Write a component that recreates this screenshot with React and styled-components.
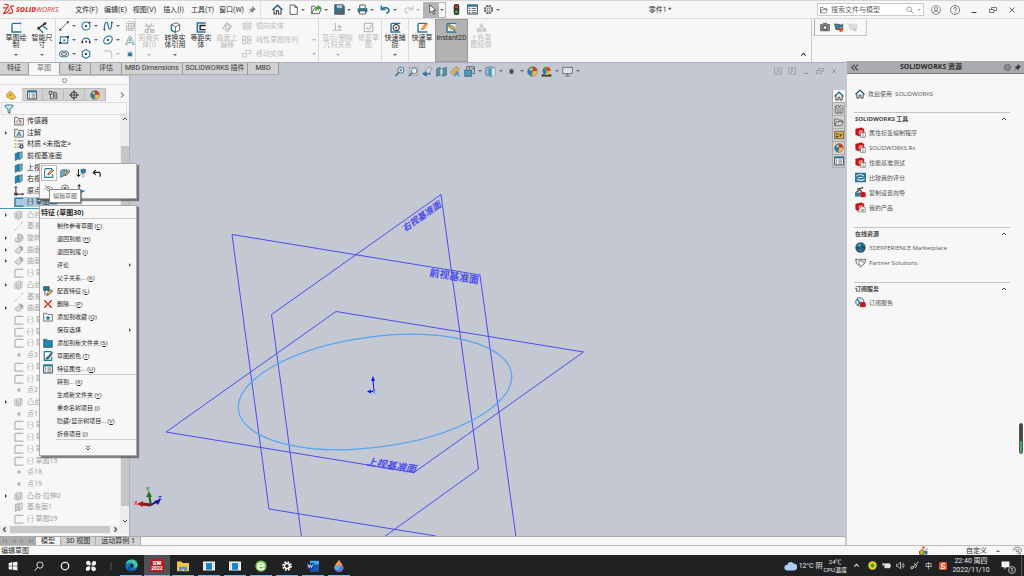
import React, { useState } from "react"
import styled, { createGlobalStyle, css } from "styled-components"

const theme = {
	paper: "#f7f7f7",
	canvas: "#c4c8d3",
	line: "#c8c8c8",
	tab: "#d2d2d2",
	ink: "#2b2b2b",
	muted: "#a4a4a4",
	blue: "#2a7799",
	plane: "#4c4cf0",
}

const GlobalStyle = createGlobalStyle`
	* {
		box-sizing: border-box;
	}
	body {
		margin: 0;
		overflow: hidden;
		font-family: Roboto, "Noto Sans CJK SC", sans-serif;
		font-size: 7px;
		line-height: 8px;
		color: ${theme.ink};
	}
	button, input {
		font: inherit;
		color: inherit;
		background: none;
		border: 0;
		padding: 0;
		margin: 0;
	}
	ul {
		list-style: none;
		margin: 0;
		padding: 0;
	}
	a {
		color: inherit;
		text-decoration: none;
	}
`

/* ---------- icons, all on a 16 x 16 grid ---------- */

const B = "#2a7799"
const K = "#404040"
const G = "#bdbdbd"

const sketchCorner = color => <path d="M15 2H3Q1.500 2 1.500 4V14.500H15" stroke={color} strokeWidth="2" />

const cube = (
	<>
		<path d="M1 3L9 1l4 2v8l-8 2-4-2z" fill="#c5161d" stroke="#8c1014" strokeWidth=".6" />
		<path d="M5 5l7-1v7l-7 1z" fill="#e43b3b" />
		<path d="M7 5v5M7 7.500h3M10 5v5" stroke="#fff" strokeWidth="1" />
	</>
)

const icons = {
	home: (
		<>
			<path d="M3 8v6.500h3.500V10h3v4.500H13V8" stroke={K} strokeWidth="1.500" />
			<path d="M.8 8.700L8 1.800l7.200 6.900" stroke="#1f5d7a" strokeWidth="2.200" />
		</>
	),
	page: <path d="M3 1.500h7l3.500 3.500v10H3zM10 1.500V5h3.500" stroke={K} fill="#fff" strokeWidth="1.200" />,
	open: (
		<>
			<path d="M1 14V3h4l1.500 2H10M1 14h11l3-8H5z" stroke="#555" strokeWidth="1.300" />
			<path d="M7 10c1-4 3-5 5-5M9.500 2.500L13 5l-3 3" stroke="#3ba52b" strokeWidth="2.200" />
		</>
	),
	save: (
		<>
			<path d="M1 1h12l2 2v12H1z" fill="#2f7291" stroke="#33434b" />
			<path d="M4 1.500h8V6H4z" fill="#b7c6cd" />
			<path d="M3.500 9h9v6h-9z" fill="#5d6468" />
		</>
	),
	print: (
		<>
			<path d="M4 6V1.500h8V6" stroke="#444" fill="#fff" strokeWidth="1.300" />
			<path d="M1 6h14v6H1z" fill="#2f7291" />
			<path d="M3.500 10h9v4.500h-9z" fill="#fff" stroke="#444" strokeWidth="1.200" />
		</>
	),
	undo: <path d="M2 2v6h6M2.500 7.500C6 4 13 5 13 9.500c0 2.500-2 3.500-4 4" stroke={B} strokeWidth="2.400" />,
	redo: <path d="M14 2v6H8M13.500 7.500C10 4 3 5 3 9.500c0 2.500 2 3.500 4 4" stroke="#d0d0d0" strokeWidth="2" />,
	cursor: <path d="M4 1v12l3-3 2.500 5 2-1L9 9.500h4z" fill="#fff" stroke="#333" strokeWidth="1.100" />,
	traffic: (
		<>
			<rect x="4" y="0" width="8" height="16" rx="3" fill="#333" />
			<circle cx="8" cy="4" r="2.400" fill="#e3342b" />
			<circle cx="8" cy="11.500" r="2.400" fill="#47a53a" />
		</>
	),
	list: (
		<>
			<path d="M1 1.500h14v13H1z" stroke="#3b4b54" fill="#fff" strokeWidth="1.500" />
			<path d="M1 1h14v3H1z" fill={B} />
			<path d="M3 6.500h2M3 9.500h2M3 12.500h2" stroke={B} strokeWidth="1.800" />
			<path d="M7 6.500h6M7 9.500h6M7 12.500h6" stroke="#555" strokeWidth="1.300" />
		</>
	),
	gear: (
		<>
			<circle cx="8" cy="8" r="5.800" stroke="#555" strokeWidth="1.700" strokeDasharray="3 1.550" />
			<circle cx="8" cy="8" r="4.800" stroke="#666" strokeWidth="1.200" />
			<circle cx="8" cy="8" r="2.200" stroke="#555" strokeWidth="1.200" />
		</>
	),
	gearWhite: (
		<>
			<circle cx="8" cy="8" r="6.500" stroke="#fff" strokeWidth="2.500" strokeDasharray="3 2.100" />
			<circle cx="8" cy="8" r="4" stroke="#fff" strokeWidth="2.500" />
		</>
	),
	pin: <path d="M9 1l6 6-2 .5-3 3-.5 3L3 7l3-.5 3-3zM6 10l-5 5" fill="#888" stroke="#888" strokeWidth="1.300" />,
	pinDark: <path d="M9 1l6 6-2 .5-3 3-.5 3L3 7l3-.5 3-3zM6 10l-5 5" fill="#333" stroke="#333" strokeWidth="1.300" />,
	folder: <path d="M1 14V3h5l1.500 2H13v2.500M1 14h11l3-6.500H4z" stroke="#555" strokeWidth="1.300" />,
	folderBlue: <path d="M1 2h5l1.500 2H15v11H1z" fill="#2784ad" stroke="#1c546e" />,
	search: (
		<>
			<circle cx="6.500" cy="6.500" r="4.700" stroke="#777" strokeWidth="1.400" />
			<path d="M10 10l5 5" stroke="#777" strokeWidth="1.600" />
		</>
	),
	user: (
		<>
			<circle cx="8" cy="8" r="7.200" stroke="#666" strokeWidth="1.100" />
			<circle cx="8" cy="6.500" r="2.600" stroke="#666" strokeWidth="1.200" />
			<path d="M3.500 13c.5-5 8.500-5 9 0" stroke="#666" strokeWidth="1.200" />
		</>
	),
	help: (
		<>
			<circle cx="8" cy="8" r="7.200" stroke="#555" strokeWidth="1.200" />
			<path d="M5.700 6.200c0-3.200 4.800-3 4.600 0C10.200 7.800 8 7.800 8 9.800M8 11.300v1.500" stroke="#555" strokeWidth="1.400" />
		</>
	),
	minimize: <path d="M3 13h10" stroke="currentColor" strokeWidth="2" />,
	restore: <path d="M1 7h9v6H1zM5 7V3h10v6h-5" stroke="currentColor" strokeWidth="1.400" />,
	close: <path d="M3 3l10 10M13 3L3 13" stroke="currentColor" strokeWidth="1.600" />,
	dockLeft: <path d="M1 2h14v12H1zM10 5.500L6.500 8l3.500 2.500z" stroke="currentColor" strokeWidth="1.400" />,
	dockRight: <path d="M1 2h14v12H1zM6.500 5.500L10 8l-3.500 2.500z" stroke="currentColor" strokeWidth="1.400" />,

	sketch: (
		<>
			<path d="M14 3v11" stroke="#bcd4df" strokeWidth="1.500" strokeDasharray="2 1" />
			{sketchCorner(B)}
		</>
	),
	dimension: (
		<>
			<path d="M2 9L12 2" stroke="#222" strokeWidth="1.800" />
			<path d="M0 11l1.500-5 3.500 4zM14 0l-5 1.500L12 5z" fill="#222" />
			<path d="M3 10l6 6M8 5l7 6" stroke={B} strokeWidth="2" />
		</>
	),
	line: (
		<>
			<path d="M2 14L14 2" stroke={B} strokeWidth="1.400" />
			<path d="M.500 12.500h3v3h-3zM12.500.500h3v3h-3z" fill={K} />
		</>
	),
	circle: (
		<>
			<circle cx="8" cy="8" r="6.500" stroke={B} strokeWidth="1.700" />
			<path d="M6.500 6.500h3v3h-3zM12 1h3v3h-3z" fill={K} />
		</>
	),
	spline: (
		<>
			<path d="M2 14C2 4 5 0 7 3s1 10 4 10 3-6 3-11" stroke={B} strokeWidth="1.900" />
			<path d="M1 12.500h2.500V15H1zM13 1h2.500v2.500H13z" fill={K} />
		</>
	),
	pattern: (
		<path d="M2 4h12v11H2zM6 4v11M10 4v11M2 8h12M2 12h12M4 1h11v11" stroke="#888" strokeWidth="1" strokeDasharray="2 1" />
	),
	rect: (
		<>
			<path d="M2 3h12v10H2z" stroke={B} strokeWidth="1.700" />
			<path d="M0 11h3.500v3.500H0zM12.500 1.500H16V5h-3.500zM7 7h2.500v2.500H7z" fill={K} />
		</>
	),
	arc: (
		<>
			<path d="M2 11C2 3 14 3 14 11" stroke={B} strokeWidth="1.800" />
			<path d="M.500 10h3v3h-3zM12.500 10h3v3h-3zM6.700 9h3v3h-3z" fill={K} />
		</>
	),
	ellipse: (
		<>
			<ellipse cx="8" cy="8" rx="7.500" ry="5.500" transform="rotate(-38 8 8)" stroke={B} strokeWidth="1.800" />
			<path d="M6.500 6.500h3v3h-3z" fill={K} />
		</>
	),
	textA: <path d="M1 15L7 2h2l6 13h-3l-1.200-3H5.200L4 15zM6.300 9.500h3.400L8 5.500z" stroke="#5b88a0" strokeWidth="1.100" />,
	slot: (
		<>
			<rect x=".8" y="3.500" width="14.400" height="9" rx="4.500" stroke={B} strokeWidth="1.600" />
			<rect x="4" y="6" width="8" height="4" rx="2" stroke={K} strokeWidth="1.300" />
		</>
	),
	polygon: (
		<>
			<path d="M8 1l6 3.500v7L8 15l-6-3.500v-7z" stroke={B} strokeWidth="1.800" />
			<path d="M6.500 6.500h3v3h-3z" fill={K} />
		</>
	),
	fillet: <path d="M1 3h7c4 0 6 3 6 6v6" stroke="#c4c4c4" strokeWidth="1.700" />,
	point: (
		<>
			<path d="M5 5.500h6v6H5z" fill={B} />
			<path d="M4 4.500h8v8H4z" stroke="#9cc" strokeWidth=".8" />
		</>
	),
	trim: <path d="M2 2l10 11M12 2L4 11M2 11h4v4H2zM10 11h4v4h-4zM1 6h14" stroke={G} strokeWidth="1.700" />,
	convert: (
		<>
			<path d="M2 4l7-3 5 3v8l-6 3-6-3z" fill="#fff" stroke="#555" strokeWidth="1.300" />
			<path d="M2 4l6 3 6-3M8 7v8" stroke="#555" strokeWidth="1.200" />
			<path d="M2 4v8l6 3" stroke={B} strokeWidth="2" />
		</>
	),
	offset: (
		<>
			<path d="M14 1.500H2v13h12" stroke={B} strokeWidth="2.400" />
			<path d="M14 5H6v6h8" stroke="#222" strokeWidth="2" />
		</>
	),
	surfaceOffset: (
		<path d="M1 9l6-8 7 5-6 8zM5 7a3 3 0 1 0 6 0 3 3 0 1 0-6 0M8 12v3" stroke={G} strokeWidth="1.500" />
	),
	mirror: <path d="M8 1v14M2 3v10h3V3zM11 3v10h3V3z" stroke={G} strokeWidth="1.400" />,
	linear: <path d="M1 2h5v5H1zM9 2h5v5H9zM1 9h5v5H1zM9 9h5v5H9z" stroke={G} strokeWidth="1.400" />,
	move: <path d="M1 7h6v6H1zM9 2h5v5H9M5 3h4" stroke={G} strokeWidth="1.500" />,
	relations: <path d="M5 1v11M1 12h13M11 6v5M8 8l3-3 3 3" stroke={G} strokeWidth="1.600" />,
	repair: <path d="M2 2h12v12H2zM5 8l3 3 6-8" stroke={G} strokeWidth="1.700" />,
	snap: (
		<>
			{sketchCorner(B)}
			<circle cx="9" cy="8" r="4.500" stroke="#333" strokeWidth="1.500" />
			<circle cx="9" cy="8" r="1.500" fill="#333" />
		</>
	),
	rapid: (
		<>
			{sketchCorner(B)}
			<path d="M6 11L12 2l3 1.500-5 7z" fill="#f0a63c" stroke="#d9641f" />
		</>
	),
	instant: (
		<>
			<path d="M2 1h12v14H2z" fill="#dfe9ee" />
			{sketchCorner(B)}
			<path d="M4 3l9 6v4L4 7z" fill="#d4be4a" stroke="#5b5526" />
		</>
	),
	shaded: <path d="M8 1l4 7H4zM1 9h7v6H1zM9 9h6v5H9z" fill="#cacaca" />,

	camera: (
		<>
			<path d="M1 4h3l1.500-2h5L12 4h3v10H1z" fill="#888" stroke="#555" strokeWidth="1.300" />
			<circle cx="8" cy="9" r="3.400" stroke="#333" fill="#ddd" strokeWidth="1.400" />
		</>
	),
	record: (
		<>
			<path d="M1 3l9 1v8H3zM10 6l4-3v9" fill="#2f86a8" stroke="#333" />
			<circle cx="11" cy="12.500" r="3.300" fill="#ee4a16" />
		</>
	),
	recordOff: (
		<>
			<path d="M1 3l9 1v8H3zM10 6l4-3v9" fill="#ddd" stroke="#d0d0d0" />
			<circle cx="11" cy="12" r="3" fill="#ccc" />
		</>
	),

	zoomFit: (
		<>
			<circle cx="10" cy="6" r="4.500" stroke="#58727f" fill="#dfe8ed" strokeWidth="1.400" />
			<path d="M7 9l-5 6" stroke="#4d7389" strokeWidth="2.400" />
			<path d="M8 6h4M10 4v4" stroke="#2f7fa5" strokeWidth="1.200" />
		</>
	),
	zoomArea: (
		<>
			<path d="M2 2h12v12H2z" stroke="#777" strokeDasharray="2 1.500" />
			<circle cx="9" cy="7" r="4" stroke="#667c87" fill="#e6edf1" strokeWidth="1.200" />
			<path d="M6 10l-5 5" stroke="#4d7389" strokeWidth="2.200" />
		</>
	),
	prevView: (
		<>
			<path d="M2 10l8-8 4 2-6 8z" fill="#dde3e6" stroke="#6f7b82" />
			<path d="M6 9v5l-4-2.500zM6 11.500h7" fill="#2a7799" stroke="#2a7799" strokeWidth="2" />
		</>
	),
	section: (
		<>
			<path d="M1 4l5-2v11l-5 2zM10 4l5-2v11l-5 2z" fill="#4c9abb" stroke="#2c5d73" />
			<path d="M6 4h4v9H6z" fill="#e2e4e6" stroke="#777" />
		</>
	),
	dynamic: (
		<>
			<path d="M1 9l8-8 4 3-8 9z" fill="#e8b24c" stroke="#92754a" />
			<path d="M8 8l6 7M13 8l-7 7" stroke="#4a8fae" strokeWidth="1.800" />
		</>
	),
	orient: (
		<>
			<path d="M1 6h10v9H1z" fill="#4c9abb" stroke="#2c5d73" />
			<path d="M4 6V1h11v10h-4M8 1v5M11 4h4" stroke="#555" strokeWidth="1.200" />
		</>
	),
	display: (
		<>
			<path d="M1 3l7-2 7 2v10l-7 2-7-2z" fill="#8fbdd1" stroke="#55707d" />
			<path d="M5 3l5 1v11l-5-2z" fill="#4b9dbf" />
			<path d="M10 4l5-1v10l-5 2z" fill="#d9e3e8" />
		</>
	),
	eye: (
		<>
			<path d="M1 8c3-5 11-5 14 0-3 5-11 5-14 0z" fill="#dedfe2" stroke="#999" />
			<circle cx="8" cy="8" r="3.200" fill="#444" />
		</>
	),
	ball: (
		<>
			<circle cx="8" cy="8" r="7" fill="#e7c23b" />
			<path d="M8 8L2 4.500A7 7 0 0 1 8 1z" fill="#3ea05b" />
			<path d="M8 8V1a7 7 0 0 1 7 6z" fill="#d93a34" />
			<path d="M8 8l-1 7A7 7 0 0 1 2 4.500z" fill="#3278b8" />
			<circle cx="8" cy="8" r="7" stroke="#666" strokeWidth=".8" />
			<circle cx="6" cy="5" r="1.600" fill="#fff" opacity=".7" />
		</>
	),
	scene: (
		<>
			<path d="M1 12h14v3.500H1z" fill="#444" />
			<circle cx="8" cy="7" r="6" fill="#e0b93b" />
			<path d="M8 7L3 4a6 6 0 0 1 5-3z" fill="#3ea05b" />
			<path d="M8 7V1a6 6 0 0 1 6 6z" fill="#d93a34" />
			<path d="M8 7l-1 6A6 6 0 0 1 3 4z" fill="#3278b8" />
		</>
	),
	monitor: <path d="M1 2h14v9H1zM8 11v3M4 14.500h8" fill="#dfe3e8" stroke="#666" strokeWidth="1.300" />,

	part: (
		<>
			<path d="M1 7l5-5 5 3 1 3 3 2-1 4-5 1-4-2-4-2z" fill="#eec046" stroke="#a67919" />
			<path d="M5 7l3-1 1 3-3 1z" fill="#b98a22" />
		</>
	),
	config: <path d="M2 2h4v5H2zM4 7v7h5M9 3l5 2v9L9 12zM11 6v5" stroke="#555" strokeWidth="1.500" />,
	target: (
		<>
			<circle cx="8" cy="8" r="5" stroke="#333" strokeWidth="1.600" />
			<path d="M8 0v16M0 8h16" stroke="#333" strokeWidth="1.400" />
		</>
	),
	filter: <path d="M1 3c0-2 14-2 14 0L9.500 9v6l-3-1.500V9z" fill="#cfe3ec" stroke="#2f6a85" strokeWidth="1.500" />,
	sensor: (
		<>
			<path d="M1 14.500V2h5l1.500 2H15v10.500z" stroke="#666" fill="#eee" strokeWidth="1.400" />
			<circle cx="8" cy="9.500" r="3.500" stroke="#555" fill="#fff" />
			<path d="M8 9.500l2-2" stroke="#d33" strokeWidth="2" />
		</>
	),
	annotation: (
		<>
			<path d="M1 14.500V2h5l1.500 2H15v10.500z" stroke="#666" fill="#eee" strokeWidth="1.400" />
			<path d="M4.500 13L8 6l3.500 7M6 11h4" stroke={B} strokeWidth="1.600" />
		</>
	),
	material: (
		<>
			<path d="M6 3h9M6 8h9M6 13h4" stroke="#666" strokeWidth="1.600" />
			<path d="M1 2h3M1 8h3M1 13h3" stroke="#c9a13a" strokeWidth="2.400" />
			<circle cx="12" cy="12" r="2.500" stroke="#333" strokeWidth="1.800" />
		</>
	),
	plane: (
		<>
			<path d="M2 4l6-2v10l-6 3z" fill="#2b85ab" stroke="#1f5a73" />
			<path d="M8 3l5-2v10l-5 3z" fill="#6cb1cd" stroke="#1f5a73" />
		</>
	),
	planeGrey: (
		<>
			<path d="M2 4l6-2v10l-6 3z" fill="#ccc" stroke="#9c9c9c" />
			<path d="M8 3l5-2v10l-5 3z" fill="#e0e0e0" stroke="#9c9c9c" />
		</>
	),
	origin: <path d="M3 1v12h12M1 3l2-2 2 2M13 11l2 2-2 2M1 11.500h4v3H1z" stroke="#222" strokeWidth="1.500" />,
	sketchGrey: sketchCorner("#b5b5b5"),
	extrude: (
		<>
			<path d="M1 5l5-3 7 1v9l-6 3-6-2z" fill="#e2e2e2" stroke="#aaa" />
			<path d="M7 6v9M4 4v9M10 2v11" stroke="#aaa" strokeWidth="1.300" />
		</>
	),
	axis: <path d="M1 15l4-4M7 9l2-2M11 5l4-4" stroke="#b0b0b0" strokeWidth="1.300" />,
	revolve: (
		<>
			<path d="M6 2c6-2 10 3 8 8s-9 6-12 3c6 0 7-4 4-6z" fill="#c9c9c9" stroke="#999" />
			<circle cx="4.500" cy="11" r="3" fill="#ddd" stroke="#aaa" />
		</>
	),
	surface: (
		<>
			<path d="M1 10c3-2 4-6 8-7l6 4c-3 2-5 6-8 7z" fill="#d9d9d9" stroke="#999" />
			<path d="M9 1l5 3-3 5" fill="#aaa" stroke="#888" />
		</>
	),
	dot: <circle cx="8" cy="8" r="2.400" fill="#b0b0b0" stroke="#ccc" strokeWidth="1.500" />,

	editSketch: (
		<>
			<path d="M13 1H3Q1 1 1 3v12h13V9" stroke={B} strokeWidth="1.700" />
			<path d="M6 11l1-3 6-6 2.500 2-7 6.500z" fill="#f0b44b" stroke="#333" strokeWidth="1.100" />
		</>
	),
	editFeature: (
		<>
			<path d="M1 4l6-2v10l-6 3zM7 4l4-2v8" fill="#6aa8c4" stroke="#31647b" />
			<path d="M8 12l1-3 5-6 2 2-6 7z" fill="#f0b44b" stroke="#333" />
		</>
	),
	rollback: (
		<>
			<path d="M4 2v11M1 10l3 4 3-4" stroke="#222" strokeWidth="1.600" />
			<path d="M8 2h7v5l-3.500 2L8 7z" fill="#3b86a8" stroke="#244c5e" />
			<circle cx="11.500" cy="12.500" r="2" stroke="#999" />
		</>
	),
	back: <path d="M6 3L2 7l4 4M3 7h8c3 0 2 4 2 7" stroke="#222" strokeWidth="1.900" />,
	hide: <path d="M1 9c3-6 11-6 14 0M5 8a3 3 0 1 0 6 0M2 2l12 12" stroke="#777" strokeWidth="1.400" />,
	zoomSel: (
		<>
			<circle cx="8" cy="7" r="5.500" stroke="#667" strokeWidth="1.500" />
			<circle cx="8" cy="7" r="2.500" fill="#55788a" />
		</>
	),
	normal: (
		<>
			<path d="M5 1v14M3 4l2-3 2 3" stroke="#222" strokeWidth="1.500" />
			<path d="M5 8l10 3-8 4z" fill="#2f86a8" />
		</>
	),
	configure: (
		<>
			<path d="M1 1h9v6H1z" fill="#2a7799" stroke="#234" />
			<path d="M3 7v8M6 15l1-4 6-5 2.500 2-6 6z" fill="#efc04b" stroke="#333" strokeWidth="1.200" />
		</>
	),
	remove: <path d="M2 2l12 12M14 2L2 14" stroke="#e33a1e" strokeWidth="2.400" />,
	favorite: (
		<>
			<path d="M1 14.500V2h5l1.500 2H15v10.500z" stroke="#666" fill="#f4f4f4" strokeWidth="1.400" />
			<path d="M8 5.500l1.200 2.500 2.800.3-2 2 .5 2.700L8 11.700 5.500 13l.5-2.700-2-2 2.800-.3z" fill={B} />
		</>
	),
	color: (
		<>
			<path d="M13 1H2v14h12V9" stroke={B} strokeWidth="1.900" />
			<path d="M4 12c2 0 1-3 4-3L14 1l1.500 2L10 11c-1 2-4 3-6 1z" fill="#2f6f8c" stroke="#333" strokeWidth=".7" />
		</>
	),

	books: (
		<path
			d="M2 4l3-2 3 2v10l-3 1-3-1zM8 4l3-2 3 2v10l-3 1-3-1M2 4l3 1.500V15M8 4l3 1.500V15"
			fill="#eee"
			stroke="#444"
			strokeWidth="1.200"
		/>
	),
	palette: (
		<>
			<path d="M1 2h14v12H1z" fill="#e8b93f" stroke="#555" strokeWidth="1.300" />
			<path d="M3 5h4v2H3zM3 9h4v3H3zM9 5l4 3-4 4z" fill="#444" />
		</>
	),
	tool: (
		<>
			{cube}
			<path d="M8 8h7v7H8z" fill="#fff" stroke="#666" />
			<path d="M10 10h3M10 13h3" stroke="#666" />
		</>
	),
	rating: (
		<>
			<path d="M0 1h16v14H0z" fill="#2b7ba1" />
			<path d="M2 6c4-3 8-3 11 0M3 10c3 3 8 3 11 0M5 8h6" stroke="#e9f3f7" strokeWidth="1.700" />
		</>
	),
	wizard: (
		<>
			<path d="M1 8l6-4 3 3M3 3l9-2" stroke="#444" strokeWidth="1.700" />
			<path d="M0 8h7v6H0z" fill="#2b7ba1" />
			<path d="M7 8l5-1 3.500 1.500v6L8 15z" fill="#c5161d" />
		</>
	),
	products: (
		<>
			{cube}
			<path d="M4 14l5-8 6 2v7z" fill="#f4f4f4" stroke="#777" />
			<circle cx="11" cy="12" r="2" fill="#8cb56a" />
		</>
	),
	globe: (
		<>
			<circle cx="8" cy="8" r="7.500" fill="#1d5876" />
			<path d="M2 6c4-3 8-3 12 0M3 11c3 2 7 2 10 0M8 1v14" stroke="#4c8eac" />
			<circle cx="6" cy="5" r="2" fill="#9bc7d9" opacity=".6" />
		</>
	),
	hands: <path d="M1 3l4 1 3-1 3 1 4-1v5l-5 5-3 1-5-5zM5 7l4-2 5 4M5 9l3 3" fill="#eee" stroke="#555" strokeWidth="1.200" />,
	service: (
		<>
			<circle cx="7" cy="7" r="6" fill="#dce6ea" stroke="#3a6579" strokeWidth="1.300" />
			<path d="M3 3l4 5-3 4" stroke="#2b7ba1" strokeWidth="2" />
			<path d="M7 8l5-1 3.500 1.500v6L8 15z" fill="#c5161d" />
		</>
	),
	build: (
		<>
			<path d="M1 15V9l4-3 4 3v6zM9 10l6-6" fill="#e5a928" stroke="#444" strokeWidth="1.200" />
			<path d="M10 9h5v6h-5z" fill="#2b6f9b" />
			<path d="M6 1h4v4H6z" fill="#d85a21" />
		</>
	),
	tags: <path d="M1 8c0-4 3-6 7-6s7 3 7 6-3 6-7 6M4 7h8M5 10h6M11 12l3 3" stroke="#666" strokeWidth="1.500" />,

	windows: <path d="M1 3l6-1v5.500H1zM8 1.900L15 1v6.500H8zM1 8.500h6V14l-6-1zM8 8.500h7V15l-7-1z" fill="#f4f4f4" />,
	find: (
		<>
			<circle cx="9.500" cy="6.500" r="5" stroke="#eee" strokeWidth="1.400" />
			<path d="M6 10l-5 5.500" stroke="#eee" strokeWidth="1.600" />
		</>
	),
	cortana: <circle cx="8" cy="8" r="6" stroke="#f4f4f4" strokeWidth="2" />,
	fan: (
		<>
			<path
				d="M8 7C3 8 0 5 2 2c2-2 6-1 6 5zM9 8c-1-5 2-8 5-6 2 2 1 6-5 6zM8 9c5-1 8 2 6 5-2 2-6 1-6-5zM7 8c1 5-2 8-5 6-2-2-1-6 5-6z"
				fill="#f1f1f1"
			/>
			<path d="M8 5v6M5 8h6" stroke="#222" strokeWidth=".8" />
		</>
	),
	edge: (
		<>
			<circle cx="8" cy="8" r="7.500" fill="#1677c4" />
			<path d="M1 6C3-2 16-1 15.500 8c0 2-3 3.500-5.500 2 2-3-1-6-4-5.500S1.500 6 1 6z" fill="#43c9a0" />
			<path d="M6 8c-1 5 4 7 8 4-3 4-10 4-11-1z" fill="#0f4f96" />
			<circle cx="8.500" cy="8.500" r="2.200" fill="#1e2226" />
		</>
	),
	explorer: (
		<>
			<path d="M0 2h6l1.500 2H16v11H0z" fill="#f6c445" />
			<path d="M3 9h10v6h-3v-3H6v3H3z" fill="#3f94d6" />
		</>
	),
	appWindow: (
		<>
			<path d="M0 2h16v12H0z" fill="#f1f1f1" />
			<path d="M4 4h8v9H4z" fill="#1d83cf" />
			<path d="M1 5h2M1 8h2M13 5h2M13 8h2" stroke="#aaa" />
		</>
	),
	browser: (
		<>
			<circle cx="8" cy="8" r="7.500" fill="#7cc94b" />
			<path d="M12.500 10.500C8 15 3 12 4 7.500s7-4.500 8 .5H4.500" stroke="#fff" strokeWidth="2" />
		</>
	),
	word: (
		<>
			<path d="M4 1h12v14H4z" fill="#41a5ee" />
			<path d="M4 6h12v9H4z" fill="#185abd" />
			<path d="M0 4h9v8H0z" fill="#103f91" />
			<path d="M1.500 6l1.300 4L4.500 6.500 6 10l1.500-4" stroke="#fff" strokeWidth="1.100" />
		</>
	),
	drop: (
		<>
			<path d="M8 0c3 4 6 7 6 10.500a6 5.500 0 0 1-12 0C2 7 5 4 8 0z" fill="#ef5b86" />
			<path d="M8 0C5 4 2 7 2 10.500L12 6z" fill="#f39a4a" />
			<path d="M3 12c1 5 10 5 11-1.500C14 8 9 8 3 12z" fill="#5a6ff0" />
			<path d="M2 10c2-4 6-4 8 0-2 3-5 4-7 3z" fill="#42b7ee" />
		</>
	),
	cloud: <path d="M4 14a3.500 3.500 0 0 1 0-7 4.500 4.500 0 0 1 8-1.500 4 4 0 0 1 0 8.500z" fill="#a9cdf5" />,
	safe: (
		<>
			<circle cx="8" cy="8" r="7.500" fill="#f3d21d" />
			<path d="M8 4v8M4 8h8" stroke="#2b9b3c" strokeWidth="3" />
		</>
	),
	battery: <path d="M1 4l4 2-4 2M5 5h9v7H5zM15 7v3M8 7h5v4H8z" fill="#ddd" stroke="#eee" strokeWidth="1.300" />,
	sound: <path d="M1 6h3l4-4v12l-4-4H1zM10 5c2 1 2 5 0 6M12 3c3 2 3 8 0 10" stroke="#ddd" strokeWidth="1.300" />,
	link: <path d="M6 10c-5-2-6 4-3 4 4 0 3-7 7-7 4 1 1 5-2 5M10 7L15 1M7 4l4 3" stroke="#eee" strokeWidth="1.400" />,
	sogou: (
		<>
			<rect x="0" y="0" width="16" height="16" rx="3" fill="#f1502f" />
			<path d="M12 4C8 2 4 4 5 6.500S12 8 11.500 11 6 13.500 3.500 11.500" stroke="#fff" strokeWidth="2.200" />
		</>
	),
	notice: <path d="M1 1h14v10H9l-3 4v-4H1z" fill="#f4f4f4" />,
}

const Svg = styled.svg`
	display: block;
	flex: none;
	width: ${p => p.$size}px;
	height: ${p => p.$size}px;
`

const Icon = ({ name, size = 11 }) => (
	<Svg viewBox="0 0 16 16" fill="none" $size={size} aria-hidden="true">
		{icons[name]}
	</Svg>
)

const Caret = styled.span`
	flex: none;
	width: 0;
	height: 0;
	border: 2px solid transparent;
	border-bottom-width: 0;
	border-top-color: ${p => (p.$off ? "#b5b5b5" : "#666")};
`

const Chevron = ({ d = "M4 10l4-4 4 4", size = 9, color = "#444" }) => (
	<Svg viewBox="0 0 16 16" fill="none" $size={size} aria-hidden="true">
		<path d={d} stroke={color} strokeWidth="2" />
	</Svg>
)

const IconButton = styled.button`
	display: flex;
	align-items: center;
	justify-content: center;
	flex: none;
	width: ${p => p.$w || 14}px;
	height: ${p => p.$h || 14}px;
	color: ${p => p.$color || "#444"};
`

/* ---------- shell ---------- */

const Page = styled.div`
	position: relative;
	display: flex;
	flex-direction: column;
	height: 100vh;
	background: ${theme.paper};
`

const TitleBar = styled.header`
	display: flex;
	align-items: center;
	flex: none;
	height: 19px;
	padding-right: 3px;
	border-top: 1px solid #d5d5d5;
	border-bottom: 1px solid #d9d9d9;
`

const Logo = styled.div`
	display: flex;
	align-items: center;
	gap: 1px;
	width: 72px;
	padding-left: 2px;
	font-family: "Open Sans", sans-serif;
	color: #dc3a35;
	font-style: italic;
	b {
		font-weight: 800;
	}
`

const MenuBar = styled.nav`
	display: flex;
	width: 176px;
	button {
		width: 29px;
		text-align: center;
		white-space: nowrap;
	}
`

const QuickBar = styled.div`
	display: flex;
	align-items: center;
	height: 18px;
	margin-left: 4px;
	padding-left: 8px;
	border-left: 1px solid #e0e0e0;
`

const Quick = styled.div`
	display: flex;
	align-items: center;
	width: ${p => (p.$single ? 16 : 23)}px;
	height: 16px;
	${p =>
		p.$selected &&
		css`
			background: linear-gradient(90deg, #b4b4b4 70%, ${theme.paper} 70%);
			border: 1px solid #b4b4b4;
			margin-right: 2px;
		`}
`

const DocTitle = styled.h1`
	flex: 1;
	margin: 0;
	font-size: 7px;
	font-weight: 400;
	text-align: center;
`

const SearchBox = styled.label`
	display: flex;
	align-items: center;
	gap: 3px;
	width: 107px;
	height: 13px;
	padding: 0 2px;
	margin-right: 2px;
	background: #fff;
	border: 1px solid #ccc;
	input {
		flex: 1;
		min-width: 0;
		outline: 0;
	}
	input::placeholder {
		color: #666;
		opacity: 1;
	}
`

const quickItems = [
	{ icon: "home", label: "主页", single: true },
	{ icon: "page", label: "新建" },
	{ icon: "open", label: "打开" },
	{ icon: "save", label: "保存" },
	{ icon: "print", label: "打印" },
	{ icon: "undo", label: "撤消" },
	{ icon: "redo", label: "重做", off: true },
	{ icon: "cursor", label: "选择", selected: true },
	{ icon: "traffic", label: "重建", single: true },
	{ icon: "list", label: "属性", single: true },
	{ icon: "gear", label: "选项" },
]

const menus = [
	["文件", "F"],
	["编辑", "E"],
	["视图", "V"],
	["插入", "I"],
	["工具", "T"],
	["窗口", "W"],
]

const Header = () => (
	<TitleBar>
		<Logo>
			<Svg viewBox="0 0 16 16" fill="none" $size={13} aria-hidden="true">
				<path d="M3 2c3-1 6 0 4 3L2 13c4 0 7-3 7-6M1 6h5" stroke="#dc3a35" strokeWidth="1.500" />
				<path d="M15 4c-3-1-5 0-4 2l2 3c1 3-2 4-5 4" stroke="#dc3a35" strokeWidth="1.700" />
			</Svg>
			<span>
				<b>SOLID</b>WORKS
			</span>
		</Logo>
		<MenuBar>
			{menus.map(([text, key]) => (
				<button key={key}>
					{text}({key})
				</button>
			))}
		</MenuBar>
		<Icon name="pin" size={8} />
		<QuickBar>
			{quickItems.map(q => (
				<Quick key={q.icon} $single={q.single} $selected={q.selected}>
					<IconButton $w={16} aria-label={q.label}>
						<Icon name={q.icon} />
					</IconButton>
					{!q.single && <Caret $off={q.off} />}
				</Quick>
			))}
		</QuickBar>
		<DocTitle>零件1 *</DocTitle>
		<SearchBox>
			<Icon name="folder" size={8} />
			<input type="search" placeholder="搜索文件与模型" aria-label="搜索文件与模型" />
			<Icon name="search" size={8} />
			<Caret $off />
		</SearchBox>
		{["user", "help", "minimize", "restore", "close"].map(name => (
			<IconButton key={name} $w={19} aria-label={name}>
				<Icon name={name} size={name === "user" || name === "help" ? 10 : 8} />
			</IconButton>
		))}
	</TitleBar>
)

/* ---------- ribbon ---------- */

const RibbonRow = styled.div`
	display: flex;
	align-items: flex-start;
	flex: none;
	height: 43px;
`

const Ribbon = styled.div`
	display: flex;
	flex: 1;
	height: 43px;
	border-right: 1px solid ${theme.line};
`

const Group = styled.div`
	display: flex;
	padding-left: ${p => p.$pad || 0}px;
	border-right: ${p => (p.$last ? 0 : 1)}px solid #d9d9d9;
`

const Tool = styled.button`
	display: flex;
	flex-direction: column;
	align-items: center;
	width: ${p => p.$w || 26}px;
	padding: 3px 0;
	line-height: 7px;
	text-align: center;
	white-space: pre;
	color: ${p => (p.disabled ? "#bdbdbd" : theme.ink)};
	background: ${p => (p.$on ? "#b2b2b2" : "none")};
	box-shadow: ${p => (p.$on ? "inset 0 0 0 1px #999" : "none")};
	svg {
		margin-bottom: 2px;
	}
	${Caret} {
		margin-top: auto;
		margin-bottom: 3px;
	}
`

const SketchGrid = styled.div`
	display: grid;
	grid-template-columns: repeat(3, 22px) 13px;
	grid-auto-rows: 14px;
	width: 79px;
	div {
		display: flex;
		align-items: center;
	}
`

const ToolList = styled.ul`
	display: grid;
	grid-auto-rows: 14px;
	width: 78px;
	padding-left: 2px;
	color: #bdbdbd;
	li {
		display: flex;
		align-items: center;
		justify-content: space-between;
		padding-right: 2px;
	}
	button {
		display: flex;
		align-items: center;
		gap: 4px;
	}
`

const MacroBar = styled.div`
	display: flex;
	align-items: center;
	width: 54px;
	height: 17px;
	margin-left: 1px;
	padding-left: 5px;
	border: 1px solid ${theme.line};
	border-width: 0 1px 1px 0;
	background-image: linear-gradient(90deg, transparent 1px, #aaa 1px, #aaa 2px, transparent 2px);
`

const MacroArea = styled.div`
	width: 212px;
`

const Collapse = styled.button`
	align-self: flex-end;
	margin: 0 3px 3px auto;
`

const sketchTools = ["line", "circle", "spline", "pattern", "rect", "arc", "ellipse", "textA", "slot", "polygon", "fillet", "point"]

const RibbonTool = ({ icon, text, caret, caretOff, ...rest }) => (
	<Tool {...rest}>
		<Icon name={icon} />
		{text}
		{caret && <Caret $off={caretOff} />}
	</Tool>
)

const RibbonBar = () => (
	<RibbonRow>
		<Ribbon>
			<Group $pad={3}>
				<RibbonTool icon="sketch" text={"草图绘\n制"} caret />
				<RibbonTool icon="dimension" text={"智能尺\n寸"} caret />
			</Group>
			<Group>
				<SketchGrid>
					{sketchTools.map((name, i) => (
						<div key={name}>
							<IconButton $w={16} aria-label={name}>
								<Icon name={name} size={10} />
							</IconButton>
							{i % 4 !== 3 && name !== "polygon" && <Caret $off={name === "fillet"} />}
						</div>
					))}
				</SketchGrid>
			</Group>
			<Group>
				<RibbonTool icon="trim" text={"剪裁实\n体(I)"} caret caretOff disabled />
				<RibbonTool icon="convert" text={"转换实\n体引用"} caret />
				<RibbonTool icon="offset" text={"等距实\n体"} />
				<RibbonTool icon="surfaceOffset" text={"曲面上\n偏移"} disabled />
				<ToolList>
					<li>
						<button disabled>
							<Icon name="mirror" size={10} /> 镜向实体
						</button>
					</li>
					<li>
						<button disabled>
							<Icon name="linear" size={10} /> 线性草图阵列
						</button>
						<Caret $off />
					</li>
					<li>
						<button disabled>
							<Icon name="move" size={10} /> 移动实体
						</button>
						<Caret $off />
					</li>
				</ToolList>
			</Group>
			<Group>
				<RibbonTool icon="relations" text={"显示/删除\n几何关系"} caret caretOff disabled $w={37} />
				<RibbonTool icon="repair" text={"修复草\n图"} disabled $w={25} />
			</Group>
			<Group>
				<RibbonTool icon="snap" text={"快速捕\n捉"} caret />
			</Group>
			<Group $last>
				<RibbonTool icon="rapid" text={"快速草\n图"} />
				<RibbonTool icon="instant" text="Instant2D" $on $w={33} />
				<RibbonTool icon="shaded" text={"上色草\n图轮廓"} disabled />
			</Group>
			<Collapse aria-label="折叠">
				<Chevron />
			</Collapse>
		</Ribbon>
		<MacroArea>
			<MacroBar>
				{["camera", "record", "recordOff"].map(name => (
					<IconButton key={name} aria-label={name}>
						<Icon name={name} size={10} />
					</IconButton>
				))}
			</MacroBar>
		</MacroArea>
	</RibbonRow>
)

/* ---------- work area ---------- */

const Main = styled.main`
	display: flex;
	flex: 1;
	min-height: 0;
`

const WorkColumn = styled.div`
	display: flex;
	flex-direction: column;
	flex: 1;
	min-width: 0;
	background: ${theme.canvas};
	border-top: 1px solid #a9adb6;
`

const TopRow = styled.div`
	display: flex;
	align-items: flex-start;
	flex: none;
	height: 12px;
	position: relative;
	z-index: 1;
`

const Tabs = styled.div`
	display: flex;
	width: 392px;
	height: 12px;
`

const Tab = styled.button`
	padding: 0 ${p => p.$pad}px;
	line-height: 11px;
	white-space: nowrap;
	background: ${p => (p.$active ? theme.paper : theme.tab)};
	color: ${p => (p.$active ? "#777" : "#333")};
	border-right: 1px solid #999;
	border-bottom: 1px solid ${p => (p.$active ? theme.paper : "#aaa")};
`

const ViewTools = styled.div`
	display: flex;
	align-items: center;
	height: 15px;
	padding-top: 1px;
	${Caret} {
		margin: 0 1px 0 2px;
	}
`

const WindowTools = styled.div`
	display: flex;
	height: 15px;
	margin-left: auto;
	padding: 1px 4px 0 0;
`

const Body = styled.div`
	display: flex;
	flex: 1;
	min-height: 0;
`

const TreePanel = styled.aside`
	display: flex;
	flex-direction: column;
	flex: none;
	width: 130px;
	background: ${theme.paper};
	border-right: 1px solid #aeb2ba;
`

const Grip = styled.div`
	display: flex;
	align-items: center;
	justify-content: center;
	height: 10px;
	border-top: 1px solid #bccac4;
	border-bottom: 1px solid #ddd;
	margin-bottom: 3px;
	&::after {
		content: "";
		width: 3px;
		height: 3px;
		border: 1px solid #888;
		border-radius: 50%;
	}
`

const PanelTabs = styled.div`
	display: flex;
	align-items: center;
	height: 13px;
	padding-left: 1px;
	button:last-child {
		margin-left: auto;
	}
`

const PanelTab = styled.button`
	display: flex;
	align-items: center;
	justify-content: center;
	width: 21px;
	height: 13px;
	background: ${p => (p.$active ? theme.paper : theme.tab)};
	border: 1px solid ${p => (p.$active ? theme.paper : "#bbb")};
	border-left: 0;
`

const FilterBox = styled.div`
	height: 13px;
	margin: 1px 2px 0 1px;
	padding: 1px 2px;
	border: 1px solid #ddd;
`

const TreeBody = styled.div`
	display: flex;
	flex: 1;
	min-height: 0;
`

const Tree = styled.ul`
	display: grid;
	grid-auto-rows: 1fr;
	flex: 1;
	min-width: 0;
`

const TreeRow = styled.li`
	display: flex;
	align-items: center;
	min-height: 0;
	color: ${p => (p.$off ? theme.muted : theme.ink)};
	border-bottom: ${p => (p.$selected ? "1px solid #4a93b5" : 0)};
	button {
		display: flex;
		align-items: center;
		gap: 3px;
		line-height: 10px;
		white-space: nowrap;
		background: ${p => (p.$selected ? "#a8cbe2" : "none")};
	}
`

const Twisty = styled.span`
	width: 14px;
	padding-left: 5px;
	&::before {
		content: "";
		display: ${p => (p.$show ? "block" : "none")};
		width: 0;
		border: 2px solid transparent;
		border-left-color: #444;
	}
`

const VScroll = styled.div`
	display: flex;
	flex-direction: column;
	align-items: center;
	justify-content: space-between;
	width: 9px;
	background: #ececec;
	&::before {
		content: "";
		order: 1;
		width: 8px;
		height: 360px;
		margin-top: 12px;
		background: #c6c6c6;
	}
	svg:last-child {
		order: 2;
	}
`

const HScroll = styled.div`
	display: flex;
	align-items: center;
	gap: 1px;
	height: 9px;
	margin-bottom: 2px;
	padding-right: 9px;
	background: #efefef;
	span {
		flex: 1;
		height: 7px;
		background: #c9c9c9;
	}
`

const treeItems = [
	["sensor", "传感器"],
	["annotation", "注解", 1],
	["material", "材质 <未指定>"],
	["plane", "前视基准面"],
	["plane", "上视"],
	["plane", "右视"],
	["origin", "原点"],
	["sketch", "(-) 草图30"],
	["extrude", "凸台", 1],
	["axis", "基准"],
	["revolve", "旋转", 1],
	["surface", "曲面", 1],
	["surface", "曲面", 1],
	["sketchGrey", "(-) 草"],
	["extrude", "凸台", 1],
	["axis", "基准"],
	["surface", "曲面", 1],
	["sketchGrey", "(-) 草"],
	["sketchGrey", "(-) 草"],
	["sketchGrey", "(-) 草"],
	["dot", "点3"],
	["sketchGrey", "(-) 草"],
	["sketchGrey", "(-) 草"],
	["dot", "点2"],
	["extrude", "凸台", 1],
	["dot", "点1"],
	["sketchGrey", "(-) 草"],
	["sketchGrey", "(-) 草"],
	["sketchGrey", "(-) 草"],
	["sketchGrey", "(-) 草图15"],
	["dot", "点18"],
	["dot", "点19"],
	["extrude", "凸台-拉伸2", 1],
	["planeGrey", "基准面1"],
	["sketchGrey", "(-) 草图29"],
]
const SELECTED = 7

const FeatureTree = () => (
	<TreePanel>
		<Grip />
		<PanelTabs>
			{["part", "list", "config", "target", "ball"].map((name, i) => (
				<PanelTab key={name} $active={i === 0} aria-label={name}>
					<Icon name={name} size={10} />
				</PanelTab>
			))}
			<IconButton aria-label="更多">
				<Chevron d="M6 3l5 5-5 5" size={8} />
			</IconButton>
		</PanelTabs>
		<FilterBox>
			<Icon name="filter" size={10} />
		</FilterBox>
		<TreeBody>
			<Tree>
				{treeItems.map(([icon, text, open], i) => (
					<TreeRow key={i} $off={i > SELECTED} $selected={i === SELECTED}>
						<Twisty $show={open} />
						<button>
							<Icon name={icon} size={10} />
							{text}
						</button>
					</TreeRow>
				))}
			</Tree>
			<VScroll>
				<Chevron size={8} />
				<Chevron d="M4 6l4 4 4-4" size={8} />
			</VScroll>
		</TreeBody>
		<HScroll>
			<Chevron d="M10 4L6 8l4 4" />
			<span />
			<Chevron d="M6 4l4 4-4 4" />
		</HScroll>
	</TreePanel>
)

const Viewport = styled.section`
	position: relative;
	flex: 1;
	min-width: 0;
	overflow: hidden;
	> svg {
		display: block;
		width: 100%;
		height: 100%;
	}
`

const SideTabs = styled.div`
	position: absolute;
	top: 15px;
	right: 0;
	width: 13px;
	button {
		display: flex;
		align-items: center;
		justify-content: center;
		width: 13px;
		height: 13px;
		background: ${theme.tab};
		border: 1px solid #aaa;
		border-top: 0;
	}
	button:first-child {
		background: ${theme.paper};
		border-right: 0;
	}
`

const PlaneLabel = styled.text`
	font-size: ${p => p.$size || 10}px;
	font-weight: 700;
	font-style: ${p => (p.$slant ? "italic" : "normal")};
	fill: ${theme.plane};
`

const Scene = () => (
	<svg role="img" aria-label="草图">
		<g transform="translate(-130 -75)">
			<g fill="none" stroke={theme.plane}>
				<path d="M436 536L269 509 232 234.500 480 275 516 537" />
				<path d="M301.500 537L271.500 314.500 441 194.500 478.500 469 384 537" />
				<path d="M336 311.500L583.500 352 414 472.500 166 432z" />
			</g>
			<ellipse
				cx="375"
				cy="392"
				rx="137.800"
				ry="55.200"
				transform="rotate(-7.600 375 392)"
				fill="none"
				stroke="#55a5f5"
				strokeWidth="1.200"
			/>
			<PlaneLabel $size={9} $slant transform="translate(405 232) rotate(-35)">
				右视基准面
			</PlaneLabel>
			<PlaneLabel transform="translate(429 276) rotate(9)">前视基准面</PlaneLabel>
			<PlaneLabel $slant transform="translate(366 465) rotate(9)">
				上视基准面
			</PlaneLabel>
			<g stroke="#1010e8" fill="#1010e8">
				<path d="M374 391L373 380M373 391.500h-3" />
				<path d="M373 376l2 5h-4zM367 391.500l4-2v4z" stroke="none" />
				<path d="M372 390l4 4M376 390l-4 4" stroke="#55a5f5" />
			</g>
			<g strokeWidth="2">
				<path d="M151 505L143 504" stroke="#8d1616" strokeWidth="3" />
				<path d="M137 504l6-3v6z" fill="#a51b1b" />
				<path d="M151 505L149 495" stroke="#18661d" />
				<path d="M149 491l3 6h-6z" fill="#1b7a22" />
				<path d="M151 505L156 502" stroke="#14147a" />
				<path d="M161 499l-3 6-4-4z" fill="#1515a8" />
			</g>
			<g fontSize="6" fontWeight="700">
				<text x="134" y="505" fill="#e33">
					X
				</text>
				<text x="146" y="491" fill="#2a9a32">
					Y
				</text>
				<text x="158" y="500" fill="#33e">
					Z
				</text>
			</g>
		</g>
	</svg>
)

const ModelTabs = styled.div`
	display: flex;
	flex: none;
	height: 9px;
	background: ${theme.paper};
	border-top: 1px solid #aaa;
	button {
		padding: 0 5px;
		line-height: 8px;
		background: ${theme.tab};
		border-right: 1px solid #aaa;
	}
	button:nth-child(2) {
		background: ${theme.paper};
	}
`

const Pager = styled.div`
	display: flex;
	align-items: center;
	justify-content: space-evenly;
	width: 36px;
	background: #ababab;
`

/* ---------- resources pane ---------- */

const Resources = styled.aside`
	flex: none;
	width: 179px;
	margin-top: -1px;
	font-family: "Open Sans", "Noto Sans CJK SC", sans-serif;
	background: ${theme.paper};
	border-left: 2px solid #c6c8cc;
`

const PaneHeader = styled.header`
	display: flex;
	align-items: center;
	gap: 2px;
	height: 13px;
	padding: 0 3px;
	background: #a9abaf;
	border-bottom: 1px solid #777;
	h2 {
		flex: 1;
		margin: 0;
		font-size: 7px;
		text-align: center;
	}
`

const PaneLink = styled.a`
	display: flex;
	align-items: center;
	gap: 3px;
	height: 15px;
	padding-left: 1px;
	font-size: 6px;
	color: #555;
`

const PaneBody = styled.div`
	padding: 12px 14px 0 7px;
	> a {
		margin-bottom: 11px;
	}
`

const PaneSection = styled.section`
	margin-bottom: 12px;
	border-top: 1px solid #c4c4c4;
	h3 {
		display: flex;
		align-items: center;
		justify-content: space-between;
		height: 12px;
		margin: 0;
		padding: 0 2px 0 1px;
		font-size: 6px;
		color: #444;
	}
`

const sections = [
	{
		title: "SOLIDWORKS 工具",
		links: [
			["tool", "属性标签编制程序"],
			["tool", "SOLIDWORKS Rx"],
			["tool", "性能基准测试"],
			["rating", "比较我的评分"],
			["wizard", "复制设置向导"],
			["products", "我的产品"],
		],
	},
	{
		title: "在线资源",
		links: [
			["globe", "3DEXPERIENCE Marketplace"],
			["hands", "Partner Solutions"],
		],
	},
	{ title: "订阅服务", links: [["service", "订阅服务"]] },
]

const ResourcePane = () => (
	<Resources>
		<PaneHeader>
			<Chevron d="M8 3L3 8l5 5M14 3L9 8l5 5" />
			<h2>SOLIDWORKS 资源</h2>
			<Icon name="gear" size={9} />
			<Icon name="pinDark" size={7} />
		</PaneHeader>
		<PaneBody>
			<PaneLink href="#">
				<Icon name="home" size={10} />
				欢迎使用&nbsp; SOLIDWORKS
			</PaneLink>
			{sections.map(s => (
				<PaneSection key={s.title}>
					<h3>
						{s.title}
						<Chevron size={8} />
					</h3>
					{s.links.map(([icon, text]) => (
						<PaneLink href="#" key={text}>
							<Icon name={icon} />
							{text}
						</PaneLink>
					))}
				</PaneSection>
			))}
		</PaneBody>
	</Resources>
)

/* ---------- floating context menu ---------- */

const floating = css`
	position: absolute;
	background: ${theme.paper};
	border: 1px solid #aaa;
	box-shadow: 2px 2px 1px rgba(70, 70, 70, 0.65);
`

const MiniBar = styled.div`
	${floating}
	top: 163px;
	left: 39px;
	display: grid;
	grid-template-columns: repeat(4, 16px);
	grid-auto-rows: 16px;
	width: 98px;
	height: 36px;
	padding: 1px;
	button:first-child {
		border: 1px solid #bbb;
		background: #fff;
	}
`

const Tooltip = styled.div`
	position: absolute;
	top: 189px;
	left: 49px;
	padding: 2px 3px;
	font-size: 6px;
	line-height: 8px;
	color: #666;
	background: #fff;
	border: 1px solid #888;
	box-shadow: 1px 1px 1px rgba(70, 70, 70, 0.5);
`

const ContextMenu = styled.div`
	${floating}
	top: 205px;
	left: 39px;
	width: 98px;
	font-family: "Open Sans", "Noto Sans CJK SC", sans-serif;
	h4 {
		margin: 0;
		padding-left: 1px;
		font-size: 7px;
		line-height: 13px;
	}
	hr {
		height: 1px;
		margin: -1px 0 0 16px;
		border: 0;
		background: #ccc;
	}
	h4 + hr {
		margin-left: 0;
	}
`

const MenuItem = styled.button`
	display: grid;
	grid-template-columns: 17px 1fr auto;
	align-items: center;
	width: 100%;
	height: 13px;
	padding: 0 5px 0 0;
	font-size: 6px;
	text-align: left;
	white-space: nowrap;
	svg {
		margin-left: 3px;
	}
`

const Arrow = styled.i`
	border: 2px solid transparent;
	border-left-color: #555;
	border-right-width: 0;
`

const More = styled.button`
	display: flex;
	align-items: center;
	justify-content: center;
	width: 100%;
	height: 15px;
`

const menuItems = [
	["", "制作参考草图", "C"],
	["", "退回到前", "H"],
	["", "退回到尾", "I"],
	["", "评论", "", 1],
	["", "父子关系...", "K"],
	["configure", "配置特征", "L"],
	["remove", "删除...", "P"],
	["favorite", "添加到收藏", "Q"],
	["", "保存选择", "", 1],
	["folderBlue", "添加到新文件夹", "S"],
	["color", "草图颜色", "T"],
	["list", "特征属性...", "U"],
	"-",
	["", "转到...", "X"],
	["", "生成新文件夹", "Y"],
	["", "重命名树项目", "J"],
	["", "隐藏/显示树项目...", "V"],
	["", "折叠项目", "J"],
	"-",
]

const SketchMenu = () => (
	<>
		<MiniBar>
			{["editSketch", "editFeature", "rollback", "back", "hide", "zoomSel", "normal"].map(name => (
				<IconButton key={name} $w={16} $h={16} aria-label={name}>
					<Icon name={name} size={10} />
				</IconButton>
			))}
		</MiniBar>
		<Tooltip>编辑草图</Tooltip>
		<ContextMenu role="menu">
			<h4>特征 (草图30)</h4>
			<hr />
			{menuItems.map((m, i) =>
				m === "-" ? (
					<hr key={i} />
				) : (
					<MenuItem key={i} role="menuitem">
						<span>{m[0] && <Icon name={m[0]} size={10} />}</span>
						<span>
							{m[1]} {m[2] && <>(<u>{m[2]}</u>)</>}
						</span>
						{m[3] && <Arrow />}
					</MenuItem>
				)
			)}
			<More aria-label="展开">
				<Chevron d="M4 3l4 4 4-4M4 8l4 4 4-4" size={8} />
			</More>
		</ContextMenu>
	</>
)

/* ---------- bottom bars ---------- */

const StatusBar = styled.footer`
	display: flex;
	align-items: center;
	flex: none;
	height: 10px;
	padding: 0 2px 0 1px;
	border-top: 1px solid #bbb;
	> span:first-child {
		flex: 1;
	}
	> span:first-child + svg {
		margin-right: 38px;
	}
`

const UpCaret = styled(Caret)`
	transform: rotate(180deg);
	margin: 0 13px 0 9px;
`

const TaskBar = styled.footer`
	display: flex;
	align-items: center;
	flex: none;
	height: 21px;
	background: #202123;
	color: #e8e8e8;
`

const Task = styled.button`
	display: flex;
	align-items: center;
	justify-content: center;
	width: 26px;
	height: 21px;
	background-color: ${p => (p.$active ? "#505153" : "transparent")};
	background-image: ${p => (p.$open ? "linear-gradient(#76b9ed, #76b9ed)" : "none")};
	background-size: ${p => (p.$active ? "100%" : "22px")} 1px;
	background-position: 50% 100%;
	background-repeat: no-repeat;
`

const Divider = styled.span`
	width: 2px;
	height: 8px;
	margin: 0 6px;
	background: #3b3c3e;
`

const SwLogo = styled.span`
	padding: 1px;
	font-size: 6px;
	font-weight: 800;
	line-height: 6px;
	color: #fff;
	background: #b51a20;
	border-radius: 2px;
	small {
		display: block;
		font-size: 5px;
		line-height: 5px;
	}
`

const Tray = styled.div`
	display: flex;
	align-items: center;
	margin-left: auto;
	height: 100%;
	border-right: 1px solid #555;
	margin-right: 2px;
`

const Weather = styled.div`
	display: flex;
	align-items: center;
	gap: 2px;
	margin-right: 1px;
	white-space: nowrap;
`

const CpuTemp = styled.div`
	font-size: 6px;
	line-height: 8px;
	text-align: center;
	white-space: pre;
`

const Clock = styled.time`
	width: 42px;
	line-height: 9px;
	text-align: center;
`

const Notice = styled.div`
	position: relative;
	padding: 0 11px 0 9px;
	b {
		position: absolute;
		right: 5px;
		bottom: -4px;
		width: 8px;
		height: 8px;
		font-size: 6px;
		font-weight: 400;
		text-align: center;
		background: #333;
		border: 1px solid #aaa;
		border-radius: 50%;
		line-height: 6px;
	}
`

const SideMeter = styled.div`
	position: absolute;
	top: 423px;
	right: 1px;
	width: 4px;
	height: 31px;
	border-radius: 2px;
	background: linear-gradient(#444 60%, #3fae6a 60%);
	border: 1px solid #555;
`

const tabs = [
	["特征", 7],
	["草图", 8],
	["标注", 8],
	["评估", 8],
	["MBD Dimensions", 3],
	["SOLIDWORKS 插件", 3],
	["MBD", 7],
]

// a trailing * marks a tool with a drop-down
const views = ["zoomFit", "zoomArea", "prevView", "section", "dynamic", "orient*", "display*", "eye*", "ball", "scene*", "monitor*"]

export default function App() {
	const [menuOpen, setMenuOpen] = useState(true)
	const [tab, setTab] = useState("草图")

	return (
		<Page>
			<GlobalStyle />
			<Header />
			<RibbonBar />
			<Main>
				<WorkColumn>
					<TopRow>
						<Tabs>
							{tabs.map(([text, pad]) => (
								<Tab key={text} $pad={pad} $active={tab === text} onClick={() => setTab(text)}>
									{text}
								</Tab>
							))}
						</Tabs>
						<ViewTools>
							{views.map(v => (
								<React.Fragment key={v}>
									<IconButton aria-label={v.replace("*", "")}>
										<Icon name={v.replace("*", "")} />
									</IconButton>
									{v.endsWith("*") && <Caret />}
								</React.Fragment>
							))}
						</ViewTools>
						<WindowTools>
							{["dockLeft", "dockRight", "minimize", "restore", "close"].map(name => (
								<IconButton key={name} $color="#8d929c" aria-label={name}>
									<Icon name={name} size={8} />
								</IconButton>
							))}
						</WindowTools>
					</TopRow>
					<Body>
						<FeatureTree />
						<Viewport onClick={() => setMenuOpen(false)}>
							<Scene />
							<SideTabs>
								{["home", "books", "folder", "palette", "ball", "list"].map(name => (
									<button key={name} aria-label={name}>
										<Icon name={name} size={10} />
									</button>
								))}
							</SideTabs>
						</Viewport>
					</Body>
					<ModelTabs>
						<Pager>
							<Chevron d="M4 3v10M12 3L7 8l5 5z" size={6} color="#888" />
							<Chevron d="M11 3L6 8l5 5z" size={6} color="#888" />
							<Chevron d="M5 3l5 5-5 5z" size={6} color="#888" />
							<Chevron d="M12 3v10M4 3l5 5-5 5z" size={6} color="#888" />
						</Pager>
						<button>模型</button>
						<button>3D 视图</button>
						<button>运动算例 1</button>
					</ModelTabs>
				</WorkColumn>
				<ResourcePane />
			</Main>
			<StatusBar>
				<span>编辑草图</span>
				<Icon name="build" size={9} />
				<span>自定义</span>
				<UpCaret />
				<Icon name="tags" size={9} />
			</StatusBar>
			<TaskBar>
				{["windows", "find", "cortana", "fan"].map(name => (
					<Task key={name} aria-label={name}>
						<Icon name={name} size={name === "fan" ? 12 : 10} />
					</Task>
				))}
				<Divider />
				<Task $open aria-label="edge">
					<Icon name="edge" size={13} />
				</Task>
				<Task $open $active>
					<SwLogo>
						SW<small>2022</small>
					</SwLogo>
				</Task>
				{["explorer", "appWindow", "appWindow", "browser", "gearWhite", "word", "drop"].map((name, i) => (
					<Task key={i} $open aria-label={name}>
						<Icon name={name} size={name === "gearWhite" ? 10 : 12} />
					</Task>
				))}
				<Tray>
					<Weather>
						<Icon name="cloud" size={13} />
						<span>12°C 阴</span>
					</Weather>
					<CpuTemp>{"24℃\nCPU温度"}</CpuTemp>
					<IconButton $w={18} aria-label="更多">
						<Chevron color="#ddd" />
					</IconButton>
					{["safe", "battery", "sound", "link"].map(name => (
						<IconButton key={name} $w={14} aria-label={name}>
							<Icon name={name} size={9} />
						</IconButton>
					))}
					<IconButton $w={15} $color="#eee">
						中
					</IconButton>
					<IconButton aria-label="输入法">
						<Icon name="sogou" size={8} />
					</IconButton>
					<Clock>
						22:40 周四
						<br />
						2022/11/10
					</Clock>
					<Notice>
						<Icon name="notice" size={9} />
						<b>1</b>
					</Notice>
				</Tray>
			</TaskBar>
			<SideMeter />
			{menuOpen && <SketchMenu />}
		</Page>
	)
}
